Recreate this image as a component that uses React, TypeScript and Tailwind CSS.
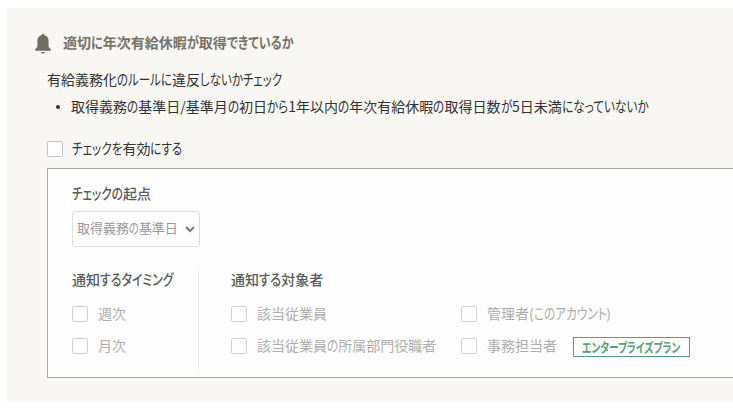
import React, { useLayoutEffect, useRef, useState } from 'react';
import clsx from 'clsx';

// A run of kana, condensed horizontally; the margin takes back the room it frees
const KanaRun: React.FC<{ text: string; scale: number }> = ({ text, scale }) => {
  const ref = useRef<HTMLSpanElement>(null);
  const [width, setWidth] = useState(0);

  useLayoutEffect(() => {
    if (ref.current) setWidth(parseFloat(getComputedStyle(ref.current).width));
  }, [text]);

  return (
    <span
      ref={ref}
      className='inline-block origin-left [font-feature-settings:"palt"]'
      style={{ transform: `scale(${scale}, 1.08)`, marginRight: -width * (1 - scale) }}
    >
      {text}
    </span>
  );
};

const Jp: React.FC<{ text: string; scale?: number }> = ({ text, scale = 0.83 }) => (
  <>
    {text.split(/([\u3040-\u30ff]+)/).map((part, i) => (i % 2 === 1 ? <KanaRun key={i} text={part} scale={scale} /> : part))}
  </>
);

interface CheckItemProps {
  label: string;
  disabled?: boolean;
}

const CheckItem: React.FC<CheckItemProps> = ({ label, disabled }) => (
  <label className={clsx('flex h-4 items-center whitespace-nowrap', disabled ? 'gap-[10px] text-[#adadab]' : 'gap-[9px] text-[#333]')}>
    <input
      type="checkbox"
      disabled={disabled}
      className={clsx('size-4 shrink-0 appearance-none rounded-[2px] border', disabled ? 'border-[#d2d2d0] bg-[#fdfdfd]' : 'border-[#c4c3c0] bg-white')}
    />
    <span className="pb-0.5">
      <Jp text={label} />
    </span>
  </label>
);

const BellIcon = () => (
  <svg className="h-5 w-[17px] shrink-0" viewBox="0 0 17 20" fill="#716b61">
    <path d="M8 0c-.8 0-1.400.5-1.500 1.200C3.900 1.900 2.400 4 2.400 6.600v5.200c0 1.300-.6 2.200-2.100 3.200V16.700h15.400V15c-1.500-1-2.100-1.900-2.100-3.200V6.600c0-2.600-1.500-4.700-4.100-5.400C9.400.5 8.800 0 8 0ZM6 18c.3 1 1.100 1.600 2 1.600s1.700-.6 2-1.600Z" />
  </svg>
);

export default function App() {
  return (
    <div className='h-[410px] overflow-hidden bg-white pt-2 pl-[7px] font-["Noto_Sans_CJK_JP",sans-serif] text-[14px] leading-5 text-[#333]'>
      <section className="h-[394px] bg-[#f8f7f3] pt-[26px] pl-7">
        <h2 className="flex h-5 items-center gap-[11px] font-bold whitespace-nowrap text-[#777168]">
          <BellIcon />
          <span className="-mt-1">
            <Jp text="適切に年次有給休暇が取得できているか" scale={0.86} />
          </span>
        </h2>

        <div className="pt-[15px] pl-3">
          <p className="whitespace-nowrap">
            <Jp text="有給義務化のルールに違反しないかチェック" scale={0.82} />
          </p>
          <ul className="mt-[7px]">
            <li className="flex items-center gap-[11px] pl-[9px] whitespace-nowrap">
              <span className="mt-0.5 size-1 rounded-full bg-[#333]" />
              <span>
                <Jp text="取得義務の基準日/基準月の初日から1年以内の年次有給休暇の取得日数が5日未満になっていないか" />
              </span>
            </li>
          </ul>

          <div className="mt-[25px]">
            <CheckItem label="チェックを有効にする" />
          </div>

          <div className="mt-[11px] h-[210px] border border-r-0 border-[#aaa79f] bg-[#fdfdfd] pt-[14px] pl-6">
            <h3 className="font-medium text-[#5b5b5b]">
              <Jp text="チェックの起点" />
            </h3>
            <div className="mt-2 flex h-9 w-32 items-center justify-between rounded-[3px] border border-[#dededd] pr-1 pl-1 whitespace-nowrap text-[#999]">
              <span className="pb-0.5 text-[13px]">
                <Jp text="取得義務の基準日" scale={0.78} />
              </span>
              <svg className="h-2 w-[10px]" viewBox="0 0 10 8" fill="none" stroke="#777" strokeWidth="2">
                <path d="m1 2 4 4 4-4" />
              </svg>
            </div>

            <div className="mt-6 flex h-[98px] whitespace-nowrap">
              <div className="w-[127px] border-r border-[#e4e1d4]">
                <h3 className="-mt-0.5 font-medium text-[#5b5b5b]">
                  <Jp text="通知するタイミング" scale={0.85} />
                </h3>
                <div className="mt-[17px] flex flex-col gap-4">
                  <CheckItem label="週次" disabled />
                  <CheckItem label="月次" disabled />
                </div>
              </div>
              <div className="pl-8">
                <h3 className="-mt-0.5 font-medium text-[#5b5b5b]">
                  <Jp text="通知する対象者" scale={0.88} />
                </h3>
                <div className="mt-[17px] grid grid-cols-[230px_auto] gap-y-4">
                  <CheckItem label="該当従業員" disabled />
                  <CheckItem label="管理者(このアカウント)" disabled />
                  <CheckItem label="該当従業員の所属部門役職者" disabled />
                  <div className="flex h-4 items-center gap-4">
                    <CheckItem label="事務担当者" disabled />
                    <span className="mt-0.5 flex h-5 w-[117px] items-center border border-[#57a077] pl-2 text-[12px] font-bold text-[#57a077]">
                      <Jp text="エンタープライズプラン" scale={0.81} />
                    </span>
                  </div>
                </div>
              </div>
            </div>
          </div>
        </div>
      </section>
    </div>
  );
}
